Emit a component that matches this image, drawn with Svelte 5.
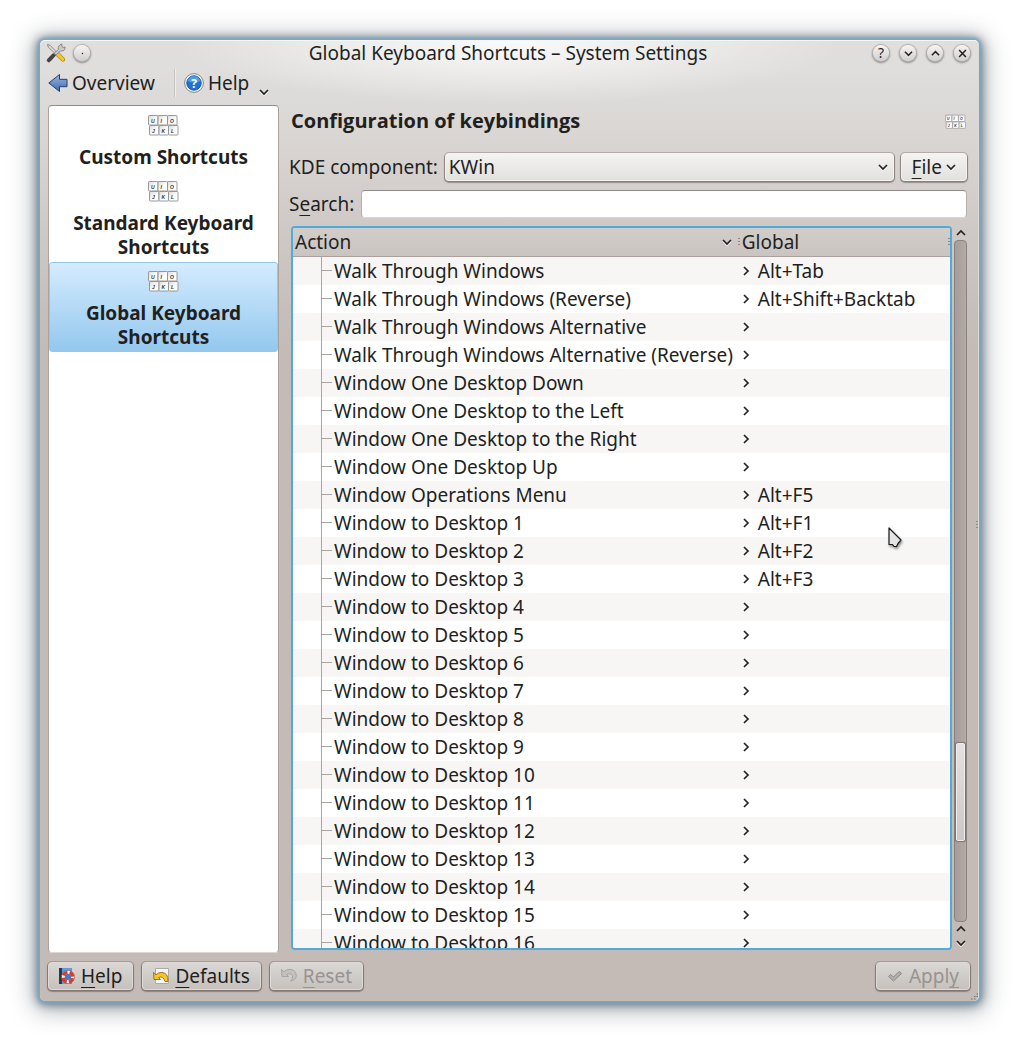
<script>
  const sections = ['Custom Shortcuts', 'Standard Keyboard Shortcuts', 'Global Keyboard Shortcuts'];
  let active = $state(2);
  let component = $state('KWin');
  let search = $state('');

  const named = [
    ['Walk Through Windows', 'Alt+Tab'],
    ['Walk Through Windows (Reverse)', 'Alt+Shift+Backtab'],
    ['Walk Through Windows Alternative', ''],
    ['Walk Through Windows Alternative (Reverse)', ''],
    ['Window One Desktop Down', ''],
    ['Window One Desktop to the Left', ''],
    ['Window One Desktop to the Right', ''],
    ['Window One Desktop Up', ''],
    ['Window Operations Menu', 'Alt+F5']
  ];
  const desktopKeys = ['Alt+F1', 'Alt+F2', 'Alt+F3'];
  const desktops = Array.from({ length: 16 }, (_, i) => [`Window to Desktop ${i + 1}`, desktopKeys[i] ?? '']);
  const actions = [...named, ...desktops];
  const shown = $derived(actions.filter(([name]) => name.toLowerCase().includes(search.toLowerCase())));

  const keys = [
    [0.5, 1, 'U'], [10, 1, 'I'], [19.5, 1, 'O'],
    [1.5, 11, 'J'], [11, 11, 'K'], [20.5, 11, 'L']
  ];
</script>

{#snippet chevron(dir)}
  <svg class="chevron {dir}" viewBox="0 0 10 10" width="10" height="10" aria-hidden="true">
    <path class="glint" d="M1 4.2 5 8.2 9 4.2" />
    <path d="M1 3 5 7 9 3" />
  </svg>
{/snippet}

{#snippet keyboard()}
  <svg class="keys" viewBox="0 0 32 22" aria-hidden="true">
    <defs>
      <linearGradient id="cap" x1="0" y1="0" x2="1" y2="1">
        <stop offset="0" stop-color="#dadada" /><stop offset=".6" stop-color="#fff" />
      </linearGradient>
    </defs>
    {#each keys as [x, y, letter]}
      <rect x={x} y={y + .5} width="9.5" height="9.5" rx=".8" fill="url(#cap)" stroke="#8f8f8f" stroke-width=".9" />
      <text x={x + 2.5} y={y + 7.8}>{letter}</text>
    {/each}
  </svg>
{/snippet}

<div class="desktop">
  <main class="window">
    <header class="titlebar">
      <div class="side">
        <svg width="20" height="20" viewBox="0 0 20 20" aria-hidden="true">
          <path d="M1.5 1.5 4 2.2 11 9.5 9.5 11 2.2 4z" fill="#ddd" stroke="#777" stroke-width=".8" />
          <path d="M10 9.5 12 8.5 18.5 15.5Q19.5 18.5 16.5 18.5L9.5 12z" fill="#f2c52c" stroke="#a88418" stroke-width=".8" />
          <path d="M2 18.8Q.3 17.5 1.7 16L7 10.5 9.5 12.5 4.5 18Q3.2 19.6 2 18.8z" fill="#444" stroke="#222" stroke-width=".6" />
          <path d="M8.2 10.2 12.4 6.5Q11.5 2.5 15.8 1L16 3.6 17 4.4 19.2 4.2Q19 8.5 14.5 8L10 12z" fill="#c9c9c9" stroke="#777" stroke-width=".8" />
        </svg>
        <button class="round" aria-label="On all desktops"><svg viewBox="0 0 10 10" width="10" height="10"><circle cx="5" cy="5" r=".8" class="dot" /></svg></button>
      </div>
      <h1>Global Keyboard Shortcuts – System Settings</h1>
      <div class="side end">
        <button class="round">?</button>
        <button class="round" aria-label="Minimize">{@render chevron('down')}</button>
        <button class="round" aria-label="Maximize">{@render chevron('up')}</button>
        <button class="round" aria-label="Close"><svg viewBox="0 0 10 10" width="10" height="10"><path d="M1.2 1.2l7.600 7.600M8.800 1.200l-7.600 7.600" /></svg></button>
      </div>
    </header>

    <nav class="toolbar" aria-label="Toolbar">
      <button class="tool">
        <svg width="20" height="20" viewBox="0 0 20 20" aria-hidden="true">
          <defs><linearGradient id="blue" x1="0" y1="0" x2="0" y2="1"><stop offset="0" stop-color="#9cb8e4" /><stop offset="1" stop-color="#3e68ab" /></linearGradient></defs>
          <path d="M.8 10 11.5 1.5V6.3H19V13.7H11.5V18.5z" fill="url(#blue)" stroke="#243f6f" />
        </svg>
        Overview
      </button>
      <span class="rule"></span>
      <button class="tool">
        <svg width="20" height="20" viewBox="0 0 20 20" aria-hidden="true">
          <circle cx="10" cy="10" r="9.4" fill="#f4f4f4" stroke="#888" />
          <circle cx="10" cy="10" r="7.2" fill="#1b74cf" stroke="#1459a6" />
          <path d="M3.5 8Q5 3 10 3T16.500 8Q10 11 3.500 8" fill="#4b9be6" />
          <text x="10" y="14.500" text-anchor="middle" class="mark">?</text>
        </svg>
        Help
        <span class="drop">{@render chevron('down')}</span>
      </button>
    </nav>

    <div class="content">
      <nav class="sections" aria-label="Sections">
        {#each sections as name, i}
          <button class:active={active === i} onclick={() => (active = i)}>
            {@render keyboard()}
            <span>{name}</span>
          </button>
        {/each}
      </nav>

      <section class="panel">
        <div class="heading">
          <h2>Configuration of keybindings</h2>
          <span class="faded">{@render keyboard()}</span>
        </div>
        <div class="field">
          <label for="component">KDE component:</label>
          <div class="combo">
            <select id="component" bind:value={component}>
              <option>KWin</option>
            </select>
            {@render chevron('down')}
          </div>
          <button class="push file"><span><u>F</u>ile</span>{@render chevron('down')}</button>
        </div>
        <div class="field search">
          <label for="search">S<u>e</u>arch:</label>
          <input id="search" type="text" bind:value={search} />
        </div>

        <div class="list">
          <div class="frame">
            <table>
              <thead>
                <tr>
                  <th class="name"><div class="head"><span>Action</span>{@render chevron('down')}<i class="grip"></i></div></th>
                  <th><div class="head"><span>Global</span><i class="grip"></i></div></th>
                </tr>
              </thead>
              <tbody>
                {#each shown as [name, key]}
                  <tr>
                    <td><div class="cell"><i class="branch"></i>{name}</div></td>
                    <td><div class="cell key">{@render chevron('right')}{key}</div></td>
                  </tr>
                {/each}
              </tbody>
            </table>
          </div>
          <div class="scroll">
            <button aria-label="Scroll up">{@render chevron('up')}</button>
            <div class="track"><div class="thumb"></div></div>
            <button aria-label="Page up">{@render chevron('up')}</button>
            <button aria-label="Scroll down">{@render chevron('down')}</button>
          </div>
        </div>
      </section>
    </div>

    <footer>
      <button class="push">
        <svg width="16" height="16" viewBox="0 0 16 16" aria-hidden="true">
          <path d="M1 0H13V16H1z" fill="#5b9bd8" /><path d="M0 0H3V16H0z" fill="#28394e" />
          <circle cx="9" cy="9" r="4.800" fill="#3f7fc0" stroke="#fff" stroke-width="3.200" />
          <circle cx="9" cy="9" r="4.800" fill="none" stroke="#dc3a28" stroke-width="3.200" stroke-dasharray="5.300 2.240" stroke-dashoffset="-1.100" />
          <circle cx="9" cy="9" r="6.600" fill="none" stroke="#b33" stroke-width=".5" />
        </svg>
        <span><u>H</u>elp</span>
      </button>
      <button class="push">
        <svg width="16" height="16" viewBox="0 0 16 16" aria-hidden="true">
          <path d="M2.500.5H15.500V15.500H2.500z" fill="#f5f5f5" stroke="#aaa" />
          <path d="M.5 4.500 1 11.500 7.500 11.500 5.500 9.500Q10 7.500 12 13.500L15 13.500Q15.500 5 9 4.500 5 4.300 3 6.800z" fill="#f5c52c" stroke="#9b6a0c" stroke-width=".9" />
        </svg>
        <span><u>D</u>efaults</span>
      </button>
      <button class="push" disabled>
        <svg width="16" height="16" viewBox="0 0 16 16" aria-hidden="true">
          <path d="M.5 1.500 1 8.500 7.500 8.500 5.500 6.500Q10 4.500 11.500 7.500 12.500 10.500 9.500 13Q15.500 12 15.300 7 14.500 2 9 1.500 5 1.300 3 3.800z" fill="#c5c1bd" stroke="#a8a4a1" />
        </svg>
        <span><u>R</u>eset</span>
      </button>
      <button class="push apply" disabled>
        <svg width="16" height="16" viewBox="0 0 16 16" aria-hidden="true">
          <path d="M1.500 8.500 3.500 6.500 6.500 9 12 3.500 14.500 5.500 6.500 13z" fill="#b3afab" stroke="#8c8885" stroke-linejoin="round" />
        </svg>
        <span>Appl<u>y</u></span>
      </button>
    </footer>
    <i class="grip edge"></i>
    <svg class="corner" width="8" height="8" viewBox="0 0 8 8" aria-hidden="true"><path d="M1 6h1.500M4 6h1.500M4 3.500h1.500M6.500 3.500h1.500M6.500 1h1.500" /></svg>
    <svg class="pointer" width="14" height="23" viewBox="0 0 14 23" aria-hidden="true">
      <path d="M1 1V17.500H4.500L6 19.500H8.500L10 16.500 13 13z" fill="#e4e4e4" stroke="#1a1a1a" stroke-width="1.200" stroke-linejoin="round" />
    </svg>
  </main>
</div>

<style>
  :global(body) { background: #fff; }
  * { box-sizing: border-box; }
  .desktop {
    height: 100vh;
    padding: 40px;
    font: 19px/28px 'Noto Sans', sans-serif;
    color: #221f1e;
    overflow: hidden;
  }
  .window {
    position: relative;
    display: flex;
    flex-direction: column;
    height: 100%;
    border-radius: 5px;
    border-top: 1px solid #f6f6f5;
    border-right: 1px solid #dedad8;
    background:
      radial-gradient(ellipse 330px 64px at 50% 0, rgba(255, 255, 255, .85), rgba(255, 255, 255, 0)),
      linear-gradient(#e0dfde 0, #dfdedc 30px, #d9d5d3 100px, #cfc9c6 190px, #c6beba 270px, #c4bbb7 310px);
    box-shadow: 0 0 3px 2px #78abc8, 0 1px 10px 3px rgba(45, 70, 90, .6), 0 3px 24px 6px rgba(50, 60, 70, .4);
  }
  button {
    font: inherit;
    color: inherit;
    padding: 0;
    border: 0;
    background: none;
  }
  u { text-decoration-thickness: 1px; text-underline-offset: 4px; text-decoration-skip-ink: none; }
  h1, h2 { margin: 0; font-size: 19px; }
  h2 { font: 700 20px/28px 'Open Sans', 'Noto Sans', sans-serif; }
  i { display: block; }
  svg { flex: none; display: block; }

  .chevron, .round svg { fill: none; stroke: #222; stroke-width: 1.700; overflow: visible; }
  .round .dot { fill: #222; stroke: none; }
  .chevron .glint { stroke: rgba(255, 255, 255, .7); }
  .up { transform: rotate(180deg); }
  .up .glint { display: none; }
  .right { transform: rotate(-90deg); }

  .titlebar { display: flex; align-items: center; height: 24px; padding: 0 8px 0 6px; }
  .titlebar h1 { font-weight: 400; }
  .side { flex: 1; display: flex; align-items: center; gap: 8px; }
  .end { justify-content: flex-end; gap: 11px; }
  .round {
    display: grid;
    place-items: center;
    width: 16px;
    height: 16px;
    border-radius: 50%;
    background: linear-gradient(#f5f5f4, #d2cfcd);
    box-shadow: 0 0 0 1px #b4b1ae, 0 1px 2px 1px #888;
    font-size: 14px;
    line-height: 16px;
  }
  .round svg { width: 9px; height: 9px; }

  .toolbar { display: flex; align-items: center; height: 34px; padding: 2px 0 0 8px; }
  .tool { display: flex; align-items: center; gap: 4px; }
  .rule { width: 2px; height: 28px; margin: 0 8px 0 19px; border-left: 1px solid #c4c1bf; border-right: 1px solid #efeeed; }
  .mark { font: 700 12px 'Open Sans', sans-serif; fill: #fff; }
  .drop { padding: 18px 0 0 6px; }

  .content { flex: 1; min-height: 0; display: flex; gap: 10px; padding: 6px 11px 0 8px; }
  .sections {
    flex: 0 0 231px;
    border: 1px solid #a9a3a0;
    border-top-color: #8f8b88;
    border-bottom-color: #dcd6d3;
    border-radius: 4px;
    background: #fff;
  }
  .sections button {
    display: flex;
    flex-direction: column;
    align-items: center;
    width: 100%;
    padding: 7px 16px 2px;
    border: 1px solid transparent;
    border-radius: 3px;
    font-weight: 700;
    line-height: 24px;
  }
  .sections button span { padding-top: 9px; }
  .sections .active { border-color: #92c8ee; background: linear-gradient(#d4ecff, #94c8ee); }
  .keys { width: 32px; height: 22px; }
  .keys text { font: italic 700 5px 'Liberation Sans', sans-serif; fill: #333; }
  .faded .keys { width: 22px; height: 15px; }

  .panel { flex: 1; min-width: 0; display: flex; flex-direction: column; }
  .heading { display: flex; align-items: center; justify-content: space-between; height: 32px; padding-left: 2px; }
  .field { display: flex; align-items: center; gap: 7px; height: 30px; margin-top: 15px; }
  .search { margin-top: 7px; }
  .combo { position: relative; flex: 1; }
  .combo .chevron { position: absolute; right: 6px; top: 9px; pointer-events: none; }
  select, .push {
    height: 28px;
    border: 1px solid #f4f3f2;
    border-radius: 4px;
    background: linear-gradient(#f4f3f2, #e3e1de);
    box-shadow: 0 0 0 1px rgba(90, 80, 75, .25), 0 1px 1px 1px rgba(60, 50, 45, .4);
  }
  select { display: block; appearance: none; width: 100%; padding: 0 24px 0 3px; font: inherit; line-height: 26px; color: inherit; }
  .push { display: flex; align-items: center; gap: 6px; padding: 0 10px; line-height: 26px; }
  .file { gap: 4px; }
  input {
    flex: 1;
    min-width: 0;
    height: 28px;
    border: 1px solid #b5afac;
    border-top-color: #8f8b88;
    border-bottom-color: #dcd6d3;
    border-radius: 4px;
    background: #fff;
    font: inherit;
  }

  .list { flex: 1; min-height: 0; display: flex; gap: 2px; margin-top: 7px; padding: 0 0 3px 2px; }
  .frame {
    flex: 1;
    overflow: hidden;
    border: 2px solid #4fabdb;
    border-radius: 4px;
    background: #fff;
  }
  table { width: 100%; table-layout: fixed; border-collapse: collapse; }
  th, td { padding: 0; text-align: left; font-weight: 400; white-space: nowrap; }
  .name { width: 68%; }
  thead { background: linear-gradient(#d3cdca, #cac4c1); }
  .head { display: flex; align-items: center; height: 29px; padding-left: 2px; border-bottom: 1px solid #a9a19d; }
  .head span { flex: 1; }
  .grip { flex: none; width: 2px; height: 8px; margin-left: 6px; background: repeating-linear-gradient(#8f8986 0 1px, transparent 1px 3px); }
  tbody tr:nth-child(odd) { background: #f7f6f5; }
  .cell { display: flex; align-items: center; height: 28px; }
  .branch {
    flex: none;
    width: 11px;
    height: 28px;
    margin: 0 2px 0 28px;
    border-left: 1px solid #a8a6a4;
    background: linear-gradient(#a8a6a4, #a8a6a4) 0 13px / 100% 1px no-repeat;
  }
  .key { gap: 7px; padding-left: 1px; }
  .key .glint { display: none; }

  .scroll { width: 13px; display: flex; flex-direction: column; align-items: center; }
  .scroll button { height: 14px; }
  .track {
    flex: 1;
    width: 13px;
    display: grid;
    grid-template-rows: 503fr 99fr 80fr;
    border: 1px solid #8a8380;
    border-radius: 4px;
    background: linear-gradient(90deg, #a59d99, #b3aaa6);
  }
  .thumb { grid-row: 2; margin: 0 1px; border: 1px solid #f0eeec; border-radius: 2px; background: linear-gradient(#e4e1df, #cdc8c5); box-shadow: 0 0 1px 1px #77716e; }

  footer { display: flex; gap: 9px; padding: 9px 8px 11px; }
  footer .push { border-color: #dddad7; background: linear-gradient(#dad7d4, #c6c1bd); }
  .push:disabled { color: #989391; }
  footer .apply { margin-left: auto; }
  .edge { position: absolute; right: 0; top: 50%; }
  .corner { position: absolute; right: 0; bottom: 0; stroke: #77716e; }
  .pointer { position: absolute; left: 848px; top: 486px; filter: drop-shadow(1px 2px 1px rgba(0, 0, 0, .4)); }
</style>
